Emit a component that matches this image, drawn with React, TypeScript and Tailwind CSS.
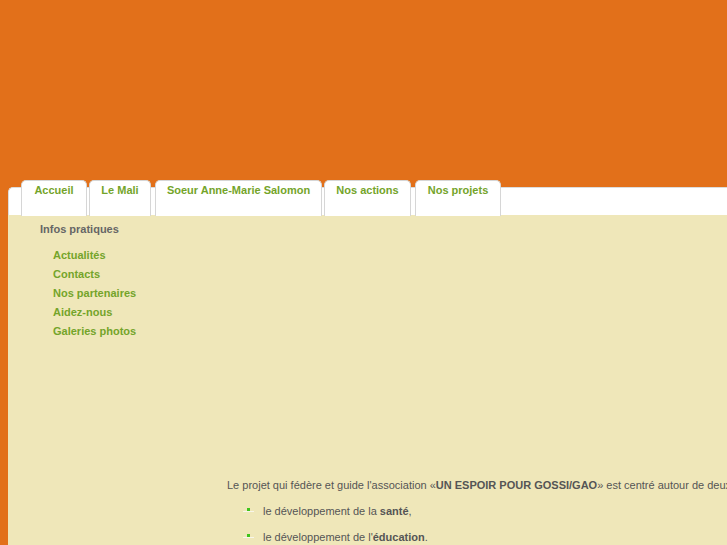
import React from 'react';

const TABS = [
  { label: 'Accueil', w: 'w-[66px]' },
  { label: 'Le Mali', w: 'w-[62px]' },
  { label: 'Soeur Anne-Marie Salomon', w: 'w-[167px]' },
  { label: 'Nos actions', w: 'w-[87px]' },
  { label: 'Nos projets', w: 'w-[86px]' },
];

const LINKS = ['Actualités', 'Contacts', 'Nos partenaires', 'Aidez-nous', 'Galeries photos'];

function Bullet() {
  return (
    <span className="relative mr-[9px] inline-block h-[6px] w-[11px] shrink-0">
      <span className="absolute left-[4px] top-0 h-[3px] w-[3px] bg-[#3ec41c]" />
      <span className="absolute left-0 top-[3px] h-[1px] w-[11px] bg-[#f8f6ea]" />
    </span>
  );
}

export default function App() {
  return (
    <div
      className="h-[545px] w-full overflow-hidden bg-[#e2701a] pl-[8px] pt-[180px]"
      style={{ fontFamily: '"Liberation Sans", Arial, sans-serif' }}
    >
      {/* tab bar */}
      <div className="mt-[7px] flex h-[28px] items-start gap-[2px] rounded-tl-[5px] border-l border-t border-[#dcdcdc] bg-white pl-[12px]">
        {TABS.map((t, i) => (
          <div
            key={t.label}
            className={`-mt-[8px] flex h-[36px] ${t.w} justify-center rounded-t-[5px] border-x border-t border-[#d6d6d6] bg-white pt-[1px] shadow-[inset_0_-14px_10px_-6px_#fff] ${
              i === 2 ? 'ml-[2px]' : ''
            } ${i === 4 ? 'ml-[2px]' : ''}`}
          >
            <span className="text-[11px] font-bold text-[#74a42a]">{t.label}</span>
          </div>
        ))}
      </div>

      {/* body */}
      <div className="flex h-full bg-[#efe7b9]">
        <div className="w-[219px] shrink-0 pl-[32px] pt-[7px]">
          <div className="text-[11px] font-bold leading-[14px] text-[#666666]">Infos pratiques</div>
          <ul className="mt-[10px] flex flex-col pl-[13px]">
            {LINKS.map((l) => (
              <li key={l} className="text-[11px] font-bold leading-[19px] text-[#74a42a]">
                {l}
              </li>
            ))}
          </ul>
        </div>
        <div className="min-w-0 flex-1 overflow-hidden whitespace-nowrap pt-[263px] text-[11px] text-[#555555]">
          <p className="leading-[14px]">
            Le projet qui fédère et guide l'association «<b>UN ESPOIR POUR GOSSI/GAO</b>» est centré autour de deux
            axes :
          </p>
          <ul className="mt-[12px] flex flex-col gap-[12px] pl-[16px]">
            <li className="flex items-center leading-[14px]">
              <Bullet />
              <span>
                le développement de la <b>santé</b>,
              </span>
            </li>
            <li className="flex items-center leading-[14px]">
              <Bullet />
              <span>
                le développement de l'<b>éducation</b>.
              </span>
            </li>
          </ul>
        </div>
      </div>
    </div>
  );
}
